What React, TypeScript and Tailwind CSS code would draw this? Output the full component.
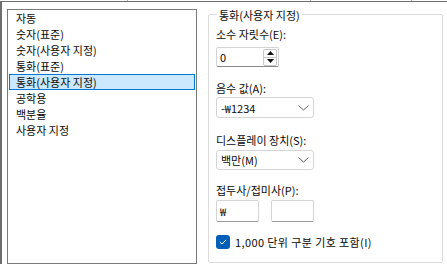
const font = { fontFamily: '"Noto Sans CJK KR", "Noto Sans", sans-serif' }

const items = [
    "자동",
    "숫자(표준)",
    "숫자(사용자 지정)",
    "통화(표준)",
    "통화(사용자 지정)",
    "공학용",
    "백분율",
    "사용자 지정",
]

function Chevron() {
    return (
        <svg width="11" height="6" viewBox="0 0 11 6" className="mr-[4px]">
            <polyline points="0.5,0.5 5.5,5 10.5,0.5" fill="none" stroke="#5f5f5f" strokeWidth="1" />
        </svg>
    )
}

function Dropdown({ value, className }: { value: string; className: string }) {
    return (
        <div className={`w-[98px] flex items-center justify-between pl-[4px] border border-[#d4d4d4] rounded-[3px] bg-white ${className}`}>
            <span>{value}</span>
            <Chevron />
        </div>
    )
}

export default function App() {
    return (
        <div className="w-[447px] h-[264px] bg-white overflow-hidden flex flex-col text-[11px] leading-4 text-[#0a0a0a]" style={font}>
            {/* column ticks above the top line */}
            <div className="h-px flex">
                <div className="ml-[127px] w-px bg-[#b0b0b0]" />
                <div className="ml-[182px] w-px bg-[#b0b0b0]" />
                <div className="ml-[100px] w-px bg-[#b0b0b0]" />
            </div>

            <div className="flex-1 flex items-start border-t border-l-2 border-[#6e6e6e]">
                {/* category list */}
                <div className="ml-[5px] mt-[7px] w-[190px] h-[255px] border border-[#7a7a7a]">
                    {items.map((it, i) => (
                        <div
                            key={it}
                            className={
                                i === 4
                                    ? "mx-px h-4 pl-[6px] border border-[#0078d7] bg-[#cce8ff] leading-[14px]"
                                    : "mx-px h-4 pl-[7px]"
                            }
                        >
                            {it}
                        </div>
                    ))}
                </div>

                {/* group box */}
                <div className="relative ml-[11px] mt-[12px] w-[235px] h-[249px] border border-[#dcdcdc] rounded-[2px] px-[7px] flex flex-col items-start">
                    <span className="absolute left-[8px] top-[-8px] px-[2px] bg-white">통화(사용자 지정)</span>

                    <div className="mt-[11px]">소수 자릿수(E):</div>
                    <div className="mt-[5px] w-[63px] h-[20px] flex items-center justify-between pl-[3px] border border-[#d4d4d4] border-b-[#8a8a8a] rounded-[2px]">
                        <span>0</span>
                        <div className="mr-px w-[14px] h-[17px] border border-[#c8c8c8] rounded-[2px] flex flex-col">
                            <div className="flex-1 flex items-center justify-center border-b border-[#c8c8c8]">
                                <svg width="7" height="4" viewBox="0 0 7 4"><polygon points="3.5,0 7,4 0,4" fill="#111" /></svg>
                            </div>
                            <div className="flex-1 flex items-center justify-center">
                                <svg width="7" height="4" viewBox="0 0 7 4"><polygon points="0,0 7,0 3.5,4" fill="#111" /></svg>
                            </div>
                        </div>
                    </div>

                    <div className="mt-[13px]">음수 값(A):</div>
                    <Dropdown value="-₩1234" className="mt-px h-[21px]" />

                    <div className="mt-[14px]">디스플레이 장치(S):</div>
                    <Dropdown value="백만(M)" className="mt-[2px] h-[20px]" />

                    <div className="mt-[12px]">접두사/접미사(P):</div>
                    <div className="mt-[2px] flex gap-[12px]">
                        <div className="w-[43px] h-[22px] flex items-center pl-[3px] border border-[#d4d4d4] border-b-[#9a9a9a] rounded-[2px]">₩</div>
                        <div className="w-[43px] h-[22px] border border-[#d4d4d4] border-b-[#9a9a9a] rounded-[2px]" />
                    </div>

                    <div className="mt-[12px] h-4 flex items-center gap-[5px]">
                        <div className="w-[14px] h-[14px] rounded-[3px] bg-[#005fb8] flex items-center justify-center">
                            <svg width="8" height="6" viewBox="0 0 8 6">
                                <polyline points="0.8,3 3,5 7.2,0.8" fill="none" stroke="#fff" strokeWidth="1" />
                            </svg>
                        </div>
                        <span className="tracking-[0.4px]">1,000 단위 구분 기호 포함(I)</span>
                    </div>
                </div>
            </div>
        </div>
    )
}
